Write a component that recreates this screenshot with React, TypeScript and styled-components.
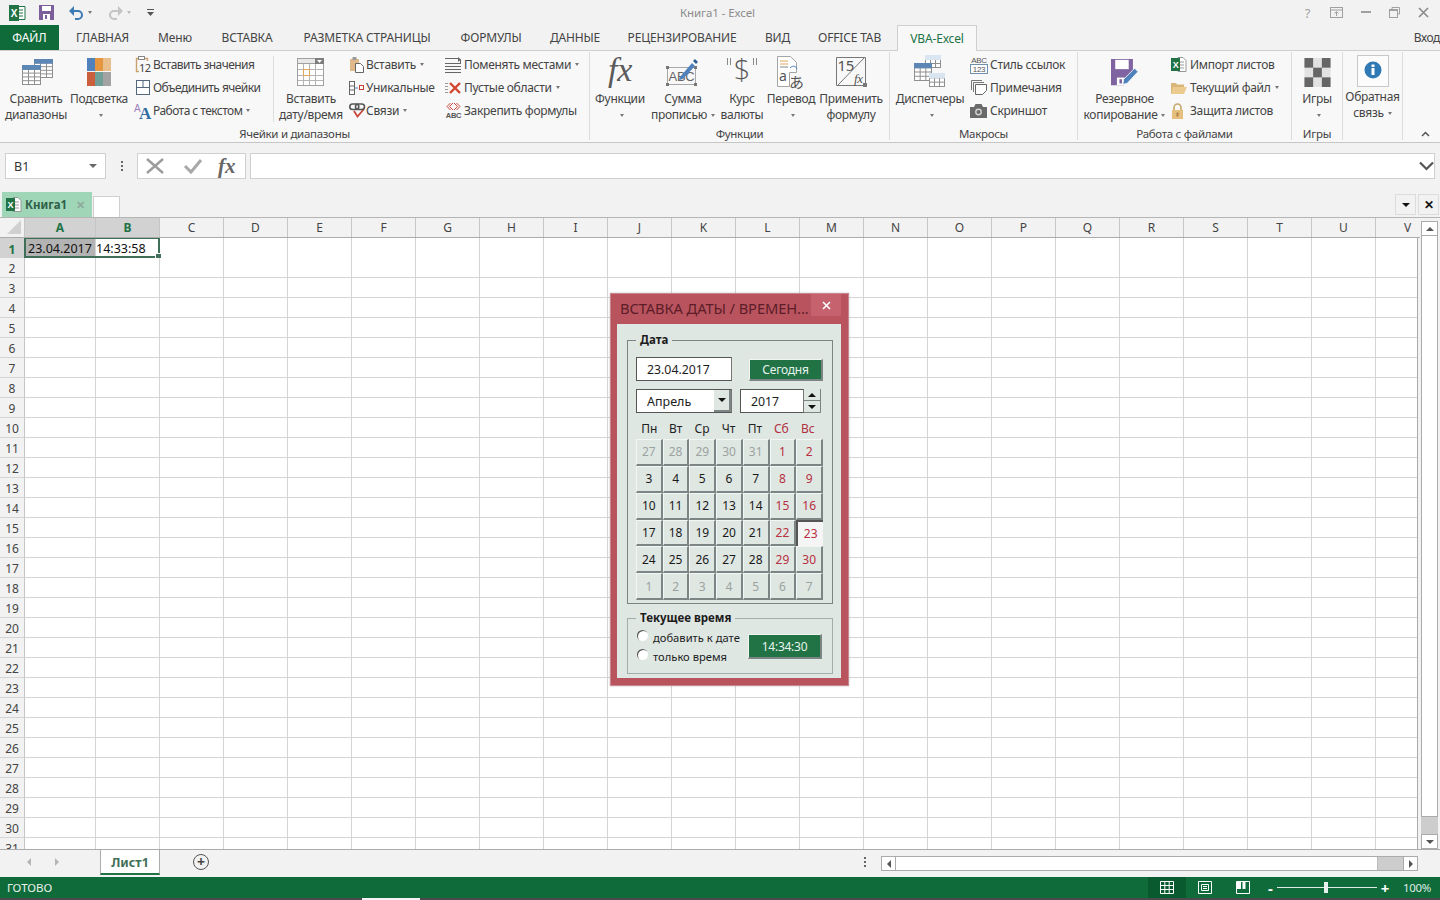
import React from 'react';
import styled, { createGlobalStyle } from 'styled-components';

const GREEN = '#217346';
const UI_FONT = '"Noto Sans", "Open Sans", sans-serif';

const GlobalStyle = createGlobalStyle`
    html, body {
        margin: 0;
        padding: 0;
        height: 100%;
        overflow: hidden;
        background: #f2f2f2;
        font-family: ${UI_FONT};
        font-size: 12px;
        color: #444;
    }
    * { box-sizing: border-box; }
    svg { overflow: visible; }
`;

/* ---------- icons ---------- */

const MiniTable = ({ x, y, w, h, cols, rows, head = '#5b86b5' }: { x: number; y: number; w: number; h: number; cols: number; rows: number; head?: string }) => {
    const lines = [];
    for (let i = 1; i < cols; i++) lines.push(<line key={`c${i}`} x1={x + (w * i) / cols} y1={y} x2={x + (w * i) / cols} y2={y + h} />);
    for (let i = 1; i < rows; i++) lines.push(<line key={`r${i}`} x1={x} y1={y + (h * i) / rows} x2={x + w} y2={y + (h * i) / rows} />);
    return (
        <g stroke="#8f8f8f" strokeWidth="1" fill="none">
            <rect x={x} y={y} width={w} height={h} fill="#fff" />
            {lines}
            <rect x={x} y={y} width={w} height={h / rows} fill={head} stroke={head} />
        </g>
    );
};

const CompareIcon = () => (
    <svg width="36" height="27" viewBox="0 0 36 27">
        <MiniTable x={16.5} y={0.5} w={18} h={18} cols={3} rows={5} />
        <MiniTable x={4.5} y={6.5} w={18} h={19} cols={3} rows={5} />
    </svg>
);

const HeatIcon = () => (
    <svg width="24" height="28" viewBox="0 0 24 28">
        <rect x="0" width="8" height="13" fill="#4f81bd" />
        <rect x="8" width="8" height="13" fill="#e5963f" />
        <rect x="16" width="8" height="13" fill="#e9c08d" />
        <rect x="0" y="14" width="8" height="14" fill="#c95f3c" />
        <rect x="8" y="14" width="8" height="14" fill="#6f9f96" />
        <rect x="16" y="14" width="8" height="14" fill="#a3a3a3" />
    </svg>
);

const CalendarIcon = () => (
    <svg width="30" height="30" viewBox="0 0 30 30">
        <rect x="1.5" y="1.5" width="26" height="27" fill="#fff" stroke="#a0a0a0" />
        <rect x="1.5" y="1.5" width="26" height="5" fill="#e8e8e8" stroke="#a0a0a0" />
        <rect x="19" y="1" width="9" height="6" fill="#7d7d7d" />
        <path d="M21 3h5l-2.5 3z" fill="#fff" />
        <g stroke="#b5b5b5">
            <path d="M7.5 7v21M13.5 7v21M19.5 7v21M2 12.5h25M2 18.5h25M2 23.5h25" />
        </g>
        <rect x="7.5" y="12.5" width="6" height="6" fill="none" stroke="#e2a65b" />
    </svg>
);

const FxIcon = () => (
    <svg width="36" height="36" viewBox="0 0 36 36">
        <text x="18" y="27" textAnchor="middle" fontFamily='"Liberation Serif", serif' fontStyle="italic" fontSize="34" fill="#5a5a5a">fx</text>
    </svg>
);

const SumIcon = () => (
    <svg width="36" height="32" viewBox="0 0 36 32">
        <rect x="2.5" y="11.5" width="28" height="17" fill="none" stroke="#a8a8a8" />
        <g fill="#777">
            <rect x="1" y="10" width="3" height="3" />
            <rect x="29" y="10" width="3" height="3" />
            <rect x="1" y="27" width="3" height="3" />
            <rect x="29" y="27" width="3" height="3" />
        </g>
        <text x="16.5" y="25" textAnchor="middle" fontFamily='"Liberation Sans", sans-serif' fontSize="13" fill="#666">ABC</text>
        <path d="M15 21l12-14 3 3-12 13-4 1z" fill="#4f81bd" />
        <path d="M28 5l2-2 3 3-2 2z" fill="#2f5f93" />
    </svg>
);

const DollarIcon = () => (
    <svg width="36" height="34" viewBox="0 0 36 34">
        <text x="18" y="25" textAnchor="middle" fontFamily='"Open Sans", sans-serif' fontWeight="300" fontSize="29" fill="#5a5a5a">$</text>
        <path d="M3.5 3v7M6.5 3v7M29.5 3v7M32.5 3v7" stroke="#888" fill="none" />
    </svg>
);

const TranslateIcon = () => (
    <svg width="30" height="34" viewBox="0 0 30 34">
        <path d="M1.5 1.5h13l6 6v10h-7v14h-12z" fill="#fff" stroke="#a5a5a5" />
        <path d="M4 6h8M4 9h8" stroke="#e2a65b" fill="none" />
        <path d="M4 12h8" stroke="#888" fill="none" />
        <path d="M14 13c3-3 6-2 7 1" stroke="#4f81bd" fill="none" />
        <text x="3" y="26" fontFamily='"Noto Sans", sans-serif' fontSize="14" fill="#555">a</text>
        <text x="13" y="33" fontFamily='"Noto Sans CJK JP", sans-serif' fontSize="15" fill="#555">あ</text>
    </svg>
);

const ApplyIcon = () => (
    <svg width="34" height="34" viewBox="0 0 34 34">
        <path d="M2.5 2.5h29v28h-29z" fill="none" stroke="#777" />
        <path d="M31 2L4 30" stroke="#777" fill="none" />
        <text x="3.5" y="16" fontFamily='"Noto Sans", sans-serif' fontSize="15" fill="#555">15</text>
        <text x="20" y="28" fontFamily='"Liberation Serif", serif' fontStyle="italic" fontSize="13" fill="#555">fx</text>
        <rect x="29" y="28" width="4" height="4" fill="#777" />
    </svg>
);

const DispatchIcon = () => (
    <svg width="34" height="34" viewBox="0 0 34 34">
        <MiniTable x={12.5} y={0.5} w={15} h={12} cols={3} rows={3} head="#d9e6f2" />
        <MiniTable x={1.5} y={8.5} w={17} h={17} cols={3} rows={4} head="#5b86b5" />
        <MiniTable x={16.5} y={18.5} w={15} h={13} cols={3} rows={3} head="#d9e6f2" />
    </svg>
);

const FloppyIcon = () => (
    <svg width="29" height="27" viewBox="0 0 34 32">
        <path d="M1 0h26v17L16 31H1z" fill="#8064a2" />
        <rect x="6" y="1" width="16" height="11" fill="#fff" />
        <rect x="8" y="22" width="9" height="9" fill="#fff" />
        <rect x="11" y="24" width="3" height="5" fill="#8064a2" />
        <path d="M15 30l1-6L29 11l4 4-13 14z" fill="#4f81bd" stroke="#f7f7f7" />
    </svg>
);

const ChessIcon = () => (
    <svg width="27" height="29" viewBox="0 0 27 30">
        <rect width="27" height="30" fill="#e2e2e2" />
        <rect width="9" height="10" fill="#666" />
        <rect x="18" width="9" height="10" fill="#666" />
        <rect x="9" y="10" width="9" height="10" fill="#666" />
        <rect y="20" width="9" height="10" fill="#666" />
        <rect x="18" y="20" width="9" height="10" fill="#666" />
    </svg>
);

const InfoIcon = () => (
    <svg width="32" height="32" viewBox="0 0 32 32">
        <rect x="0.5" y="0.5" width="31" height="31" fill="#fcfcfc" stroke="#c8c8c8" />
        <circle cx="16" cy="15" r="8.5" fill="#2f79b5" />
        <rect x="14.5" y="13" width="3" height="7" fill="#fff" />
        <rect x="14.5" y="9.5" width="3" height="2.5" fill="#fff" />
    </svg>
);

const PasteValIcon = () => (
    <svg width="18" height="18" viewBox="0 0 18 18">
        <path d="M4 2.5H1.5v13H4M10 2.5h2.5V5" stroke="#c9a36b" fill="none" strokeWidth="1.4" />
        <rect x="3.5" y="0.5" width="6" height="3" fill="#fff" stroke="#888" />
        <text x="4" y="16" fontFamily='"Noto Sans", sans-serif' fontSize="11" fill="#444">12</text>
    </svg>
);

const MergeIcon = () => (
    <svg width="16" height="17" viewBox="0 0 16 17">
        <rect x="1.5" y="1.5" width="13" height="14" fill="#fff" stroke="#54697f" />
        <path d="M1.5 8.5h13M8 1.5v7" stroke="#54697f" fill="none" />
    </svg>
);

const TextIcon = () => (
    <svg width="18" height="18" viewBox="0 0 18 18">
        <text x="-1" y="10" fontFamily='"Liberation Sans", sans-serif' fontSize="10" fill="#9a7fb8">A</text>
        <text x="4" y="17" fontFamily='"Liberation Serif", serif' fontWeight="bold" fontSize="17" fill="#2f6ea5">A</text>
    </svg>
);

const PasteIcon = () => (
    <svg width="16" height="18" viewBox="0 0 16 18">
        <rect x="1" y="3" width="9" height="12" fill="#e0b98a" />
        <rect x="3.5" y="1" width="4" height="3" fill="#999" />
        <path d="M6.5 7.5h5l3 3v6h-8z" fill="#fff" stroke="#666" />
    </svg>
);

const UniqueIcon = () => (
    <svg width="16" height="16" viewBox="0 0 16 16">
        <rect x="0.5" y="1.5" width="5" height="13" fill="#fff" stroke="#666" />
        <path d="M0.5 6h5M0.5 10h5" stroke="#666" />
        <path d="M6 8h3" stroke="#4f81bd" />
        <rect x="10.5" y="5.5" width="4" height="4" fill="#fff" stroke="#c8402f" />
    </svg>
);

const LinkIcon = () => (
    <svg width="17" height="18" viewBox="0 0 17 18">
        <path d="M5 9l3.5 5.5L15 7" fill="none" stroke="#c8473c" strokeWidth="1.8" />
        <rect x="0.8" y="2" width="9" height="5.5" rx="2.7" fill="none" stroke="#555" strokeWidth="1.6" />
        <rect x="6.5" y="2" width="9" height="5.5" rx="2.7" fill="none" stroke="#555" strokeWidth="1.6" />
    </svg>
);

const SwapIcon = () => (
    <svg width="17" height="16" viewBox="0 0 17 16">
        <path d="M0 1.5h13M0 6.5h16M0 9.5h16M0 12.5h16M0 15.5h16" stroke="#666" fill="none" />
        <path d="M13 0l3 2.5L13 5z" fill="#666" />
        <path d="M15.5 2.5v4" stroke="#666" />
    </svg>
);

const EmptyIcon = () => (
    <svg width="17" height="14" viewBox="0 0 17 14">
        <path d="M0 2.5h3M0 5.5h3M0 8.5h3M0 11.5h3" stroke="#999" />
        <path d="M5 2l10 10M15 2L5 12" stroke="#d2452f" strokeWidth="2.4" />
    </svg>
);

const FreezeIcon = () => (
    <svg width="17" height="17" viewBox="0 0 17 17">
        <path d="M5.5 1L2 4.5 5.5 8M8 1L4.5 4.5 8 8M9 1l3.5 3.5L9 8M11.5 1L15 4.5 11.5 8" fill="none" stroke="#c8473c" />
        <text x="8.5" y="16" textAnchor="middle" fontFamily='"Liberation Sans", sans-serif' fontWeight="bold" fontSize="7.5" fill="#555">ABC</text>
    </svg>
);

const LinkStyleIcon = () => (
    <svg width="18" height="18" viewBox="0 0 18 18">
        <text x="9" y="7" textAnchor="middle" fontFamily='"Liberation Sans", sans-serif' fontSize="8" fill="#555">ABC</text>
        <rect x="0.5" y="8.5" width="17" height="9" fill="#fff" stroke="#6f8fae" />
        <text x="9" y="16" textAnchor="middle" fontFamily='"Liberation Sans", sans-serif' fontSize="8" fill="#555">123</text>
    </svg>
);

const NotesIcon = () => (
    <svg width="18" height="17" viewBox="0 0 18 17">
        <path d="M1.5 11V1.5H12M3.5 13V3.5H14" fill="none" stroke="#777" />
        <path d="M5.5 5.5h11v6l-4 4h-7z" fill="#fff" stroke="#666" />
    </svg>
);

const CameraIcon = () => (
    <svg width="17" height="14" viewBox="0 0 17 14">
        <path d="M0 3h4l1.5-3h6L13 3h4v11H0z" fill="#6a6a6a" />
        <circle cx="8.5" cy="8" r="3.4" fill="#d5d5d5" />
        <circle cx="8.5" cy="8" r="2" fill="#6a6a6a" />
    </svg>
);

const ImportIcon = () => (
    <svg width="16" height="17" viewBox="0 0 16 17">
        <path d="M7 1.5h5l3 3v11H7z" fill="#fff" stroke="#999" />
        <path d="M9 6h4M9 9h4M9 12h4" stroke="#999" />
        <rect x="0" y="2" width="9" height="13" fill="#217346" />
        <text x="4.5" y="12" textAnchor="middle" fontFamily='"Liberation Sans", sans-serif' fontWeight="bold" fontSize="9" fill="#fff">X</text>
    </svg>
);

const FolderIcon = () => (
    <svg width="16" height="13" viewBox="0 0 16 13">
        <path d="M0 2h5l1 1.5h7V13H0z" fill="#d8b677" />
        <path d="M2 6h14l-3 7H0z" fill="#eccb8e" />
    </svg>
);

const LockIcon = () => (
    <svg width="13" height="16" viewBox="0 0 13 16">
        <path d="M3 7V4.5a3.5 3.5 0 0 1 7 0V7" fill="none" stroke="#c9a56b" strokeWidth="1.6" />
        <rect x="1" y="7" width="11" height="9" fill="#e6bf7e" />
        <rect x="5.5" y="9.5" width="2" height="4" fill="#a9824a" />
    </svg>
);

/* ---------- title bar ---------- */

const TitleBar = styled.div`
    height: 25px;
    display: flex;
    align-items: center;
    padding-left: 9px;
`;

const Quick = styled.div`
    display: flex;
    align-items: center;
    width: 671px;
    flex: none;
`;

const QuickSlot = styled.span<{ $w: number }>`
    width: ${p => p.$w}px;
    display: flex;
    align-items: center;
    flex: none;
`;

const Caret = styled.i<{ $color?: string }>`
    display: inline-block;
    width: 0;
    height: 0;
    border-left: 2.5px solid transparent;
    border-right: 2.5px solid transparent;
    border-top: 3px solid ${p => p.$color || '#777'};
    margin-left: 4px;
    vertical-align: middle;
`;

const WindowTitle = styled.div`
    flex: 1;
    font-size: 11.5px;
    color: #8b8b8b;
    letter-spacing: -0.1px;
`;

const WinControls = styled.div`
    display: flex;
    align-items: center;
    color: #a0a0a0;
    padding-right: 2px;
`;

const WinBtn = styled.span`
    width: 29px;
    display: flex;
    justify-content: center;
    font-size: 13px;
`;

/* ---------- tabs ---------- */

const TabsRow = styled.div`
    height: 25px;
    display: flex;
    position: relative;
    z-index: 1;
    white-space: nowrap;
`;

const FileTab = styled.div`
    width: 59px;
    background: #0f6b3a;
    color: #fff;
    display: flex;
    align-items: center;
    justify-content: center;
`;

const Tab = styled.div<{ $w: number; $active?: boolean }>`
    width: ${p => p.$w}px;
    flex: none;
    display: flex;
    align-items: center;
    justify-content: center;
    color: ${p => (p.$active ? GREEN : '#444')};
    background: ${p => (p.$active ? '#f8f8f8' : 'transparent')};
    border: ${p => (p.$active ? '1px solid #cfcfcf' : 'none')};
    border-bottom: none;
    margin-bottom: ${p => (p.$active ? '-1px' : '0')};
    margin-left: ${p => (p.$active ? '1px' : '0')};
    letter-spacing: -0.15px;
`;

const SignIn = styled.div`
    margin-left: auto;
    align-self: center;
    letter-spacing: -0.4px;
    color: #444;
`;

/* ---------- ribbon ---------- */

const Ribbon = styled.div`
    height: 93px;
    background: #f8f8f8;
    border-top: 1px solid #cfcfcf;
    border-bottom: 1px solid #c6c6c6;
    padding-top: 1px;
    display: flex;
    white-space: nowrap;
    letter-spacing: -0.3px;
`;

const Group = styled.div<{ $w: number }>`
    width: ${p => p.$w}px;
    height: 88px;
    flex: none;
    border-right: 1px solid #dcdcdc;
    display: flex;
    flex-direction: column;
`;

const GroupBody = styled.div`
    height: 74px;
    display: flex;
    padding-top: 1px;
`;

const GroupLabel = styled.div`
    height: 14px;
    line-height: 16px;
    text-align: center;
    color: #444;
    font-size: 11.5px;
`;

const InnerSep = styled.div`
    width: 1px;
    height: 66px;
    margin-top: 3px;
    background: #dedede;
    flex: none;
`;

const LargeBtn = styled.div<{ $w: number; $ml?: number }>`
    width: ${p => p.$w}px;
    margin-left: ${p => p.$ml || 0}px;
    flex: none;
    display: flex;
    flex-direction: column;
    align-items: center;
`;

const LargeIcon = styled.div<{ $h?: number }>`
    height: ${p => p.$h || 38}px;
    display: flex;
    align-items: center;
    justify-content: center;
`;

const LargeLine = styled.div`
    height: 16px;
    line-height: 16px;
    display: flex;
    align-items: center;
`;

const SmallCol = styled.div<{ $w: number; $ml?: number; $ls?: number }>`
    width: ${p => p.$w}px;
    margin-left: ${p => p.$ml || 0}px;
    flex: none;
    ${p => (p.$ls ? `letter-spacing: ${p.$ls}px;` : '')}
`;

const SmallItem = styled.div`
    height: 23px;
    display: flex;
    align-items: center;
`;

const SmallIcon = styled.span<{ $w: number }>`
    width: ${p => p.$w}px;
    flex: none;
    display: flex;
    align-items: center;
`;

const CollapseBtn = styled.div`
    flex: 1;
    display: flex;
    justify-content: flex-end;
    align-items: flex-end;
    padding: 0 10px 5px 0;
`;

type LargeProps = { icon: React.ReactNode; lines: string[]; caret?: boolean; w: number; ml?: number; iconH?: number };

const Large = ({ icon, lines, caret, w, ml, iconH }: LargeProps) => (
    <LargeBtn $w={w} $ml={ml}>
        <LargeIcon $h={iconH}>{icon}</LargeIcon>
        {lines.map((line, i) => (
            <LargeLine key={line}>
                {line}
                {caret && i === 1 && <Caret />}
            </LargeLine>
        ))}
        {caret && lines.length === 1 && <LargeLine><Caret /></LargeLine>}
    </LargeBtn>
);

type SmallRow = { icon: React.ReactNode; text: string; caret?: boolean };

const Smalls = ({ rows, w, ml, iconW, ls }: { rows: SmallRow[]; w: number; ml?: number; iconW: number; ls?: number }) => (
    <SmallCol $w={w} $ml={ml} $ls={ls}>
        {rows.map(r => (
            <SmallItem key={r.text}>
                <SmallIcon $w={iconW}>{r.icon}</SmallIcon>
                {r.text}
                {r.caret && <Caret />}
            </SmallItem>
        ))}
    </SmallCol>
);

/* ---------- formula bar ---------- */

const FormulaRow = styled.div`
    height: 49px;
    padding: 10px 5px 0 5px;
    display: flex;
    align-items: flex-start;
`;

const NameBox = styled.div`
    width: 101px;
    height: 26px;
    background: #fff;
    border: 1px solid #d0d0d0;
    display: flex;
    align-items: center;
    justify-content: space-between;
    padding: 0 8px;
    color: #333;
    font-size: 12.5px;
`;

const VDots = styled.div`
    width: 31px;
    height: 26px;
    display: flex;
    flex-direction: column;
    align-items: center;
    justify-content: center;
    gap: 2px;
    & > i {
        width: 2px;
        height: 2px;
        background: #666;
    }
`;

const FxBox = styled.div`
    width: 109px;
    height: 26px;
    background: #fff;
    border: 1px solid #d0d0d0;
    display: flex;
    align-items: center;
    padding-left: 7px;
    gap: 18px;
`;

const FxGlyph = styled.span`
    font-family: "Liberation Serif", serif;
    font-style: italic;
    font-weight: bold;
    font-size: 21px;
    color: #666;
    margin-left: -3px;
`;

const FormulaInput = styled.div`
    flex: 1;
    height: 26px;
    margin-left: 4px;
    background: #fff;
    border: 1px solid #d0d0d0;
    display: flex;
    align-items: center;
    justify-content: flex-end;
`;

/* ---------- office tab strip ---------- */

const OfficeTabs = styled.div`
    height: 26px;
    padding-left: 2px;
    display: flex;
    border-bottom: 1px solid #b5b5b5;
`;

const BookTab = styled.div`
    width: 90px;
    height: 25px;
    background: #a0d6b8;
    display: flex;
    align-items: center;
    padding-left: 4px;
    gap: 3px;
    font-weight: bold;
    color: #2f5f48;
    font-size: 11.5px;
`;

const BookClose = styled.span`
    margin-left: auto;
    margin-right: 7px;
    color: #8fa99b;
    font-size: 11px;
`;

const NewBook = styled.div`
    width: 27px;
    height: 21px;
    margin: 4px 0 0 1px;
    background: #fff;
    border: 1px solid #cfcfcf;
    border-bottom: none;
`;

const StripBtn = styled.div<{ $ml?: string }>`
    width: 21px;
    height: 21px;
    margin: 2px 0 0 ${p => p.$ml || '2px'};
    border: 1px solid #dcdcdc;
    display: flex;
    align-items: center;
    justify-content: center;
    color: #111;
    font-weight: bold;
`;

/* ---------- grid ---------- */

const GridWrap = styled.div`
    height: 632px;
    display: flex;
    border-bottom: 1px solid #ababab;
    overflow: hidden;
    background: #f2f2f2;
`;

const Sheet = styled.div`
    width: 1420px;
    flex: none;
    overflow: hidden;
`;

const gridCols = '25px 71px repeat(21, 64px)';

const HeaderRow = styled.div`
    display: grid;
    grid-template-columns: ${gridCols};
    width: 1440px;
    height: 20px;
    border-bottom: 1px solid #ababab;
`;

const Corner = styled.div`
    position: relative;
    border-right: 1px solid #c6c6c6;
    overflow: hidden;
    &::after {
        content: '';
        position: absolute;
        right: 3px;
        bottom: 3px;
        border-left: 14px solid transparent;
        border-bottom: 14px solid #d0d0d0;
    }
`;

const ColHead = styled.div<{ $sel?: boolean }>`
    display: flex;
    align-items: center;
    justify-content: center;
    border-right: 1px solid #c6c6c6;
    color: ${p => (p.$sel ? GREEN : '#444')};
    background: ${p => (p.$sel ? '#d2d2d2' : 'transparent')};
    font-weight: ${p => (p.$sel ? 'bold' : 'normal')};
    font-size: 12px;
`;

const Rows = styled.div`
    width: 1418px;
    height: 611px;
    overflow: hidden;
    background: #fff;
    border-right: 1px solid #ababab;
`;

const Row = styled.div`
    position: relative;
    display: grid;
    grid-template-columns: ${gridCols};
    width: 1440px;
    height: 20px;
`;

const RowHead = styled.div<{ $sel?: boolean }>`
    display: flex;
    align-items: center;
    justify-content: center;
    padding-top: 1px;
    background: ${p => (p.$sel ? '#d2d2d2' : '#f2f2f2')};
    color: ${p => (p.$sel ? GREEN : '#444')};
    font-weight: ${p => (p.$sel ? 'bold' : 'normal')};
    border-right: 1px solid #c6c6c6;
    border-bottom: 1px solid #d4d4d4;
    font-size: 12px;
`;

const Cell = styled.div<{ $hl?: boolean }>`
    border-right: 1px solid #d4d4d4;
    border-bottom: 1px solid #d4d4d4;
    background: ${p => (p.$hl ? '#b3b3b3' : '#fff')};
    color: #111;
    font-size: 12.5px;
    line-height: 21px;
    padding-left: ${p => (p.$hl ? '3px' : '0')};
    white-space: nowrap;
`;

const Selection = styled.div`
    position: absolute;
    left: 24px;
    top: -1px;
    width: 136px;
    height: 21px;
    border: 2px solid #3f6f58;
    &::after {
        content: '';
        position: absolute;
        right: -3px;
        bottom: -3px;
        width: 5px;
        height: 5px;
        background: #3f6f58;
        border: 1px solid #fff;
        box-sizing: content-box;
        margin: -1px;
    }
`;

const VScroll = styled.div`
    width: 20px;
    flex: none;
    padding: 3px 2px 0 1px;
    display: flex;
    flex-direction: column;
`;

const ScrollBtn = styled.div`
    height: 15px;
    flex: none;
    background: #fff;
    border: 1px solid #ababab;
    display: flex;
    align-items: center;
    justify-content: center;
`;

const VThumb = styled.div`
    height: 581px;
    flex: none;
    background: #fff;
    border: 1px solid #ababab;
    border-top: none;
`;

const VTrack = styled.div`
    flex: 1;
    background: #cdcdcd;
`;

const Arrow = styled.i<{ $dir: 'up' | 'down' | 'left' | 'right'; $color?: string }>`
    width: 0;
    height: 0;
    display: block;
    ${p => {
        const c = p.$color || '#555';
        if (p.$dir === 'up') return `border-left:4px solid transparent;border-right:4px solid transparent;border-bottom:4px solid ${c};`;
        if (p.$dir === 'down') return `border-left:4px solid transparent;border-right:4px solid transparent;border-top:4px solid ${c};`;
        if (p.$dir === 'left') return `border-top:4px solid transparent;border-bottom:4px solid transparent;border-right:4px solid ${c};`;
        return `border-top:4px solid transparent;border-bottom:4px solid transparent;border-left:4px solid ${c};`;
    }}
`;

/* ---------- sheet tabs + status ---------- */

const SheetBar = styled.div`
    height: 27px;
    display: flex;
    align-items: flex-start;
`;

const SheetNav = styled.div`
    width: 100px;
    height: 24px;
    display: flex;
    align-items: center;
    padding-left: 27px;
    gap: 24px;
`;

const SheetTab = styled.div`
    width: 60px;
    height: 25px;
    padding-top: 1px;
    background: #fff;
    border-left: 1px solid #ababab;
    border-right: 1px solid #ababab;
    border-bottom: 2px solid ${GREEN};
    color: #3f6f58;
    font-weight: bold;
    font-size: 12.5px;
    display: flex;
    align-items: center;
    justify-content: center;
`;

const AddSheet = styled.div`
    width: 16px;
    height: 16px;
    margin: 4px 0 0 33px;
    border: 1px solid #555;
    border-radius: 50%;
    color: #444;
    display: flex;
    align-items: center;
    justify-content: center;
    font-size: 14px;
    font-weight: bold;
    line-height: 1;
`;

const SheetDots = styled(VDots)`
    width: 12px;
    height: 16px;
    margin: 4px 0 0 650px;
`;

const HScroll = styled.div`
    display: flex;
    align-items: stretch;
    height: 15px;
    margin: 6px 0 0 10px;
    width: 537px;
    border: 1px solid #ababab;
    background: #cdcdcd;
`;

const HBtn = styled.div`
    width: 14px;
    flex: none;
    background: #fff;
    display: flex;
    align-items: center;
    justify-content: center;
    border-left: 1px solid #ababab;
    &:first-child {
        border-left: none;
        border-right: 1px solid #ababab;
    }
`;

const HThumb = styled.div`
    width: 482px;
    background: #fff;
    border-right: 1px solid #bbb;
`;

const HTrack = styled.div`
    flex: 1;
`;

const StatusBar = styled.div`
    height: 21px;
    background: #0f6b3a;
    color: #e8f1ec;
    display: flex;
    align-items: center;
    padding-left: 7px;
    font-size: 11.5px;
`;

const StatusLeft = styled.div`
    width: 1141px;
    flex: none;
`;

const ViewBtn = styled.div<{ $active?: boolean }>`
    width: 38px;
    height: 21px;
    display: flex;
    align-items: center;
    justify-content: center;
    background: ${p => (p.$active ? '#0a5a30' : 'transparent')};
`;

const ZoomTool = styled.div`
    display: flex;
    align-items: center;
    margin-left: 6px;
    width: 128px;
    color: #fff;
    font-weight: bold;
    font-size: 15px;
`;

const ZoomTrack = styled.div`
    position: relative;
    width: 100px;
    height: 1px;
    margin: 0 4px;
    background: #dfeae4;
`;

const ZoomKnob = styled.div`
    position: absolute;
    left: 47px;
    top: -5px;
    width: 4px;
    height: 11px;
    background: #e8f1ec;
`;

const ZoomPct = styled.div`
    margin-left: 7px;
    color: #dfeae4;
    letter-spacing: -0.3px;
`;

const TaskStrip = styled.div`
    height: 2px;
    background: #4a4a4a;
    padding-left: 362px;
    & > i {
        display: block;
        width: 58px;
        height: 2px;
        background: #f2f2f2;
    }
`;

/* ---------- dialog ---------- */

const Dialog = styled.div`
    position: absolute;
    left: 610px;
    top: 293px;
    width: 239px;
    height: 393px;
    background: #b9545f;
    border: 1px solid #c9888f;
    padding: 0 7px 7px 6px;
    display: flex;
    flex-direction: column;
    box-shadow: 0 0 2px rgba(0, 0, 0, 0.25);
`;

const DialogTitle = styled.div`
    height: 30px;
    flex: none;
    display: flex;
    align-items: flex-start;
    justify-content: space-between;
`;

const DialogCaption = styled.div`
    font-size: 14.7px;
    line-height: 28px;
    margin-left: 3px;
    color: #5c1d28;
    letter-spacing: -0.1px;
    white-space: nowrap;
`;

const DialogClose = styled.div`
    width: 30px;
    height: 22px;
    background: #c5626d;
    display: flex;
    align-items: center;
    justify-content: center;
`;

const DialogBody = styled.div`
    flex: 1;
    background: #dfe7e3;
    padding: 8px 8px 0 10px;
    color: #1c1c1c;
`;

const Field = styled.fieldset`
    margin: 0;
    padding: 9px 10px 3px 8px;
    border: 1px solid #7b8583;
    min-width: 0;
`;

const TimeField = styled(Field)`
    margin-top: 6px;
    padding: 3px 10px 9px 8px;
    border-color: #a4adaa;
`;

const Legend = styled.legend`
    margin-left: 0;
    padding: 0 4px;
    font-weight: bold;
    font-size: 11.5px;
    line-height: 16px;
`;

const FormRow = styled.div<{ $gap: number; $mt?: number }>`
    display: flex;
    align-items: center;
    gap: ${p => p.$gap}px;
    margin-top: ${p => p.$mt || 0}px;
`;

const TextBox = styled.div<{ $w: number }>`
    width: ${p => p.$w}px;
    height: 24px;
    background: #fff;
    border: 1px solid #555;
    border-right-color: #777;
    display: flex;
    align-items: center;
    padding-left: 10px;
    font-size: 12.3px;
    flex: none;
`;

const ComboBox = styled(TextBox)`
    justify-content: space-between;
    padding-right: 0;
    font-size: 12.5px;
`;

const ComboArrow = styled.div`
    width: 17px;
    height: 22px;
    background: #dfe7e3;
    border-right: 2px solid #7b8583;
    border-bottom: 2px solid #7b8583;
    display: flex;
    align-items: center;
    justify-content: center;
`;

const Spinner = styled.div`
    width: 17px;
    height: 24px;
    margin-left: -8px;
    display: flex;
    flex-direction: column;
    flex: none;
`;

const SpinBtn = styled.div`
    flex: 1;
    background: #dfe7e3;
    border-right: 1px solid #7b8583;
    border-bottom: 1px solid #7b8583;
    display: flex;
    align-items: center;
    justify-content: center;
`;

const GreenBtn = styled.div<{ $h: number; $mt?: number }>`
    width: 74px;
    height: ${p => p.$h}px;
    margin-top: ${p => p.$mt || 0}px;
    flex: none;
    background: ${GREEN};
    color: #e6f2ec;
    border-top: 1px solid #f1f6f3;
    border-left: 1px solid #f1f6f3;
    border-right: 2px solid #7b8583;
    border-bottom: 2px solid #7b8583;
    display: flex;
    align-items: center;
    justify-content: center;
    font-size: 12px;
    letter-spacing: -0.25px;
`;

const CalGrid = styled.div`
    display: grid;
    grid-template-columns: repeat(7, 1fr);
    width: 187px;
`;

const DayNames = styled(CalGrid)`
    height: 16px;
    margin-top: 8px;
    width: 185px;
`;

const DayName = styled.div<{ $red?: boolean }>`
    text-align: center;
    line-height: 16px;
    font-size: 12px;
    color: ${p => (p.$red ? '#b2303e' : '#222')};
`;

const Days = styled(CalGrid)`
    height: 161px;
    margin-top: 2px;
    grid-template-rows: repeat(6, 1fr);
`;

const Day = styled.div<{ $kind: 'norm' | 'dim' | 'red'; $today?: boolean }>`
    display: flex;
    align-items: center;
    justify-content: center;
    font-size: 12px;
    background: ${p => (p.$today ? '#f4f5f4' : '#dfe7e3')};
    color: ${p => (p.$kind === 'dim' ? '#9ba3a0' : p.$kind === 'red' ? '#b82f3f' : '#1a1a1a')};
    border-style: solid;
    border-width: ${p => (p.$today ? '2px 0 0 2px' : '1px 2px 2px 1px')};
    border-color: ${p => (p.$today ? '#555 transparent transparent #555' : '#f2f6f4 #7b8583 #7b8583 #f2f6f4')};
`;

const RadioCol = styled.div`
    display: flex;
    flex-direction: column;
    gap: 3px;
    margin-left: 1px;
    width: 111px;
    flex: none;
`;

const RadioRow = styled.div`
    height: 16px;
    display: flex;
    align-items: center;
    gap: 5px;
    font-size: 11.2px;
    white-space: nowrap;
`;

const RadioDot = styled.i`
    width: 11px;
    height: 11px;
    border-radius: 50%;
    margin-top: -4px;
    background: #fff;
    box-shadow: inset 1px 1px 0 #555;
    flex: none;
`;

/* ---------- data ---------- */

const COLS = 'ABCDEFGHIJKLMNOPQRSTUV'.split('');
const ROWS = Array.from({ length: 31 }, (_, i) => i + 1);
const TABS: [string, number][] = [
    ['ГЛАВНАЯ', 87], ['Меню', 58], ['ВСТАВКА', 86], ['РАЗМЕТКА СТРАНИЦЫ', 154], ['ФОРМУЛЫ', 94],
    ['ДАННЫЕ', 74], ['РЕЦЕНЗИРОВАНИЕ', 140], ['ВИД', 51], ['OFFICE TAB', 93],
];
const DAY_NAMES = ['Пн', 'Вт', 'Ср', 'Чт', 'Пт', 'Сб', 'Вс'];
const DAYS = [27, 28, 29, 30, 31, 1, 2, 3, 4, 5, 6, 7, 8, 9, 10, 11, 12, 13, 14, 15, 16, 17, 18, 19, 20, 21, 22, 23, 24, 25, 26, 27, 28, 29, 30, 1, 2, 3, 4, 5, 6, 7];

const dayKind = (index: number): 'norm' | 'dim' | 'red' => {
    if (index < 5 || index >= 35) return 'dim';
    return index % 7 >= 5 ? 'red' : 'norm';
};

const App: React.FC = () => (
    <>
        <GlobalStyle />
        <TitleBar>
            <Quick>
                <QuickSlot $w={30}>
                    <svg width="17" height="16" viewBox="0 0 17 16">
                        <path d="M8 1.5h8v13H8" fill="#fff" stroke="#217346" />
                        <path d="M10 5h4M10 8h4M10 11h4" stroke="#217346" />
                        <rect width="10" height="16" fill="#217346" />
                        <text x="5" y="12" textAnchor="middle" fontFamily='"Liberation Sans", sans-serif' fontWeight="bold" fontSize="10" fill="#fff">X</text>
                    </svg>
                </QuickSlot>
                <QuickSlot $w={30}>
                    <svg width="15" height="15" viewBox="0 0 15 15">
                        <rect width="15" height="15" fill="#7a5f9a" />
                        <rect x="3" y="1" width="9" height="5" fill="#fff" />
                        <rect x="4" y="9" width="7" height="6" fill="#fff" />
                        <rect x="6" y="10" width="2" height="4" fill="#7a5f9a" />
                    </svg>
                </QuickSlot>
                <QuickSlot $w={39}>
                    <svg width="15" height="14" viewBox="0 0 15 14">
                        <path d="M2 5h7a4 4 0 0 1 0 8H6" fill="none" stroke="#3d7bb5" strokeWidth="2" />
                        <path d="M5 0v10L0 5z" fill="#3d7bb5" />
                    </svg>
                    <Caret />
                </QuickSlot>
                <QuickSlot $w={39}>
                    <svg width="15" height="14" viewBox="0 0 15 14">
                        <path d="M13 5H6a4 4 0 0 0 0 8h3" fill="none" stroke="#c4c4c4" strokeWidth="2" />
                        <path d="M10 0v10l5-5z" fill="#c4c4c4" />
                    </svg>
                    <Caret $color="#bbb" />
                </QuickSlot>
                <QuickSlot $w={10}>
                    <svg width="7" height="8" viewBox="0 0 7 8">
                        <path d="M0 .5h7" stroke="#555" />
                        <path d="M0 3h7L3.5 7z" fill="#555" />
                    </svg>
                </QuickSlot>
            </Quick>
            <WindowTitle>Книга1 - Excel</WindowTitle>
            <WinControls>
                <WinBtn>?</WinBtn>
                <WinBtn>
                    <svg width="13" height="11" viewBox="0 0 13 11">
                        <rect x="0.5" y="0.5" width="12" height="10" fill="none" stroke="#a0a0a0" />
                        <path d="M.5 3h12M6.5 9V5M4.5 6.5l2-2 2 2" fill="none" stroke="#a0a0a0" />
                    </svg>
                </WinBtn>
                <WinBtn>
                    <svg width="10" height="3" viewBox="0 0 10 3"><rect y="0" width="10" height="2" fill="#a0a0a0" /></svg>
                </WinBtn>
                <WinBtn>
                    <svg width="11" height="11" viewBox="0 0 11 11">
                        <path d="M3 2V.5h7.5V7H8.5" fill="none" stroke="#a0a0a0" />
                        <rect x="0.5" y="2.5" width="8" height="8" fill="none" stroke="#a0a0a0" />
                        <path d="M.5 3.5h8" stroke="#a0a0a0" />
                    </svg>
                </WinBtn>
                <WinBtn>
                    <svg width="11" height="11" viewBox="0 0 11 11">
                        <path d="M1 1l9 9M10 1l-9 9" stroke="#8a8a8a" strokeWidth="1.6" />
                    </svg>
                </WinBtn>
            </WinControls>
        </TitleBar>

        <TabsRow>
            <FileTab>ФАЙЛ</FileTab>
            {TABS.map(([label, w]) => <Tab key={label} $w={w}>{label}</Tab>)}
            <Tab $w={80} $active>VBA-Excel</Tab>
            <SignIn>Вход</SignIn>
        </TabsRow>

        <Ribbon>
            <Group $w={590}>
                <GroupBody>
                    <Large w={66} ml={3} icon={<CompareIcon />} lines={['Сравнить', 'диапазоны']} />
                    <Large w={60} icon={<HeatIcon />} lines={['Подсветка']} caret />
                    <Smalls w={138} ml={6} iconW={18} ls={-0.55} rows={[
                        { icon: <PasteValIcon />, text: 'Вставить значения' },
                        { icon: <MergeIcon />, text: 'Объединить ячейки' },
                        { icon: <TextIcon />, text: 'Работа с текстом', caret: true },
                    ]} />
                    <InnerSep />
                    <Large w={62} ml={6} icon={<CalendarIcon />} lines={['Вставить', 'дату/время']} />
                    <Smalls w={96} ml={7} iconW={17} rows={[
                        { icon: <PasteIcon />, text: 'Вставить', caret: true },
                        { icon: <UniqueIcon />, text: 'Уникальные' },
                        { icon: <LinkIcon />, text: 'Связи', caret: true },
                    ]} />
                    <Smalls w={144} iconW={19} rows={[
                        { icon: <SwapIcon />, text: 'Поменять местами', caret: true },
                        { icon: <EmptyIcon />, text: 'Пустые области', caret: true },
                        { icon: <FreezeIcon />, text: 'Закрепить формулы' },
                    ]} />
                </GroupBody>
                <GroupLabel>Ячейки и диапазоны</GroupLabel>
            </Group>
            <Group $w={300}>
                <GroupBody>
                    <Large w={60} icon={<FxIcon />} lines={['Функции']} caret />
                    <Large w={66} icon={<SumIcon />} lines={['Сумма', 'прописью']} caret />
                    <Large w={52} icon={<DollarIcon />} lines={['Курс', 'валюты']} />
                    <Large w={46} icon={<TranslateIcon />} lines={['Перевод']} caret />
                    <Large w={70} ml={2} icon={<ApplyIcon />} lines={['Применить', 'формулу']} />
                </GroupBody>
                <GroupLabel>Функции</GroupLabel>
            </Group>
            <Group $w={188}>
                <GroupBody>
                    <Large w={80} icon={<DispatchIcon />} lines={['Диспетчеры']} caret />
                    <Smalls w={100} iconW={20} rows={[
                        { icon: <LinkStyleIcon />, text: 'Стиль ссылок' },
                        { icon: <NotesIcon />, text: 'Примечания' },
                        { icon: <CameraIcon />, text: 'Скриншот' },
                    ]} />
                </GroupBody>
                <GroupLabel>Макросы</GroupLabel>
            </Group>
            <Group $w={214}>
                <GroupBody>
                    <Large w={93} icon={<FloppyIcon />} lines={['Резервное', 'копирование']} caret />
                    <Smalls w={118} iconW={19} rows={[
                        { icon: <ImportIcon />, text: 'Импорт листов' },
                        { icon: <FolderIcon />, text: 'Текущий файл', caret: true },
                        { icon: <LockIcon />, text: 'Защита листов' },
                    ]} />
                </GroupBody>
                <GroupLabel>Работа с файлами</GroupLabel>
            </Group>
            <Group $w={51}>
                <GroupBody>
                    <Large w={50} icon={<ChessIcon />} lines={['Игры']} caret />
                </GroupBody>
                <GroupLabel>Игры</GroupLabel>
            </Group>
            <Group $w={60}>
                <GroupBody>
                    <Large w={59} iconH={36} icon={<InfoIcon />} lines={['Обратная', 'связь']} caret />
                </GroupBody>
            </Group>
            <CollapseBtn>
                <svg width="9" height="6" viewBox="0 0 9 6"><path d="M1 5l3.5-3.5L8 5" fill="none" stroke="#555" strokeWidth="1.5" /></svg>
            </CollapseBtn>
        </Ribbon>

        <FormulaRow>
            <NameBox>B1<Arrow $dir="down" $color="#666" /></NameBox>
            <VDots><i /><i /><i /></VDots>
            <FxBox>
                <svg width="20" height="16" viewBox="0 0 20 16"><path d="M2 1l16 14M18 1L2 15" stroke="#9c9c9c" strokeWidth="2.4" /></svg>
                <svg width="20" height="16" viewBox="0 0 20 16"><path d="M2 8l6 6L18 2" fill="none" stroke="#a8a8a8" strokeWidth="3" /></svg>
                <FxGlyph>fx</FxGlyph>
            </FxBox>
            <FormulaInput>
                <svg width="15" height="10" viewBox="0 0 15 10"><path d="M1 1.5l6.5 6.5L14 1.5" fill="none" stroke="#555" strokeWidth="2.2" /></svg>
            </FormulaInput>
        </FormulaRow>

        <OfficeTabs>
            <BookTab>
                <ImportIcon />
                Книга1
                <BookClose>✕</BookClose>
            </BookTab>
            <NewBook />
            <StripBtn $ml="1275px"><Arrow $dir="down" $color="#111" /></StripBtn>
            <StripBtn $ml="2px">✕</StripBtn>
        </OfficeTabs>

        <GridWrap>
            <Sheet>
                <HeaderRow>
                    <Corner />
                    {COLS.map(c => <ColHead key={c} $sel={c === 'A' || c === 'B'}>{c}</ColHead>)}
                </HeaderRow>
                <Rows>
                    {ROWS.map(r => (
                        <Row key={r}>
                            <RowHead $sel={r === 1}>{r}</RowHead>
                            {COLS.map(c => (
                                <Cell key={c} $hl={r === 1 && c === 'A'}>
                                    {r === 1 && c === 'A' && '23.04.2017'}
                                    {r === 1 && c === 'B' && '14:33:58'}
                                </Cell>
                            ))}
                            {r === 1 && <Selection />}
                        </Row>
                    ))}
                </Rows>
            </Sheet>
            <VScroll>
                <ScrollBtn><Arrow $dir="up" /></ScrollBtn>
                <VThumb />
                <VTrack />
                <ScrollBtn><Arrow $dir="down" /></ScrollBtn>
            </VScroll>
        </GridWrap>

        <SheetBar>
            <SheetNav>
                <Arrow $dir="left" $color="#b5b5b5" />
                <Arrow $dir="right" $color="#b5b5b5" />
            </SheetNav>
            <SheetTab>Лист1</SheetTab>
            <AddSheet>+</AddSheet>
            <SheetDots><i /><i /><i /></SheetDots>
            <HScroll>
                <HBtn><Arrow $dir="left" /></HBtn>
                <HThumb />
                <HTrack />
                <HBtn><Arrow $dir="right" /></HBtn>
            </HScroll>
        </SheetBar>

        <StatusBar>
            <StatusLeft>ГОТОВО</StatusLeft>
            <ViewBtn $active>
                <svg width="14" height="13" viewBox="0 0 14 13"><path d="M.5.5h13v12H.5zM.5 4.5h13M.5 8.5h13M4.8.5v12M9.2.5v12" fill="none" stroke="#fff" /></svg>
            </ViewBtn>
            <ViewBtn>
                <svg width="14" height="13" viewBox="0 0 14 13"><path d="M.5.5h13v12H.5z" fill="none" stroke="#fff" /><path d="M3.5 3.5h7v6h-7zM5 5.5h4M5 7.5h4" fill="none" stroke="#fff" /></svg>
            </ViewBtn>
            <ViewBtn>
                <svg width="14" height="13" viewBox="0 0 14 13"><path d="M.5.5h13v12H.5z" fill="none" stroke="#fff" /><rect x="1" y="1" width="4" height="7" fill="#fff" /><rect x="6.5" y="1" width="3" height="7" fill="#fff" /></svg>
            </ViewBtn>
            <ZoomTool>
                <span>-</span>
                <ZoomTrack><ZoomKnob /></ZoomTrack>
                <span>+</span>
            </ZoomTool>
            <ZoomPct>100%</ZoomPct>
        </StatusBar>
        <TaskStrip><i /></TaskStrip>

        <Dialog>
            <DialogTitle>
                <DialogCaption>ВСТАВКА ДАТЫ / ВРЕМЕН...</DialogCaption>
                <DialogClose>
                    <svg width="9" height="9" viewBox="0 0 9 9"><path d="M1 1l7 7M8 1L1 8" stroke="#fff" strokeWidth="1.6" /></svg>
                </DialogClose>
            </DialogTitle>
            <DialogBody>
                <Field>
                    <Legend>Дата</Legend>
                    <FormRow $gap={17}>
                        <TextBox $w={96}>23.04.2017</TextBox>
                        <GreenBtn $h={22} $mt={2}>Сегодня</GreenBtn>
                    </FormRow>
                    <FormRow $gap={8} $mt={8}>
                        <ComboBox $w={96}>
                            Апрель
                            <ComboArrow><Arrow $dir="down" $color="#111" /></ComboArrow>
                        </ComboBox>
                        <TextBox $w={64}>2017</TextBox>
                        <Spinner>
                            <SpinBtn><Arrow $dir="up" $color="#111" /></SpinBtn>
                            <SpinBtn><Arrow $dir="down" $color="#111" /></SpinBtn>
                        </Spinner>
                    </FormRow>
                    <DayNames>
                        {DAY_NAMES.map((d, i) => <DayName key={d} $red={i >= 5}>{d}</DayName>)}
                    </DayNames>
                    <Days>
                        {DAYS.map((d, i) => <Day key={i} $kind={dayKind(i)} $today={i === 27}>{d}</Day>)}
                    </Days>
                </Field>
                <TimeField>
                    <Legend>Текущее время</Legend>
                    <FormRow $gap={0}>
                        <RadioCol>
                            <RadioRow><RadioDot />добавить к дате</RadioRow>
                            <RadioRow><RadioDot />только время</RadioRow>
                        </RadioCol>
                        <GreenBtn $h={25}>14:34:30</GreenBtn>
                    </FormRow>
                </TimeField>
            </DialogBody>
        </Dialog>
    </>
);

export default App;
